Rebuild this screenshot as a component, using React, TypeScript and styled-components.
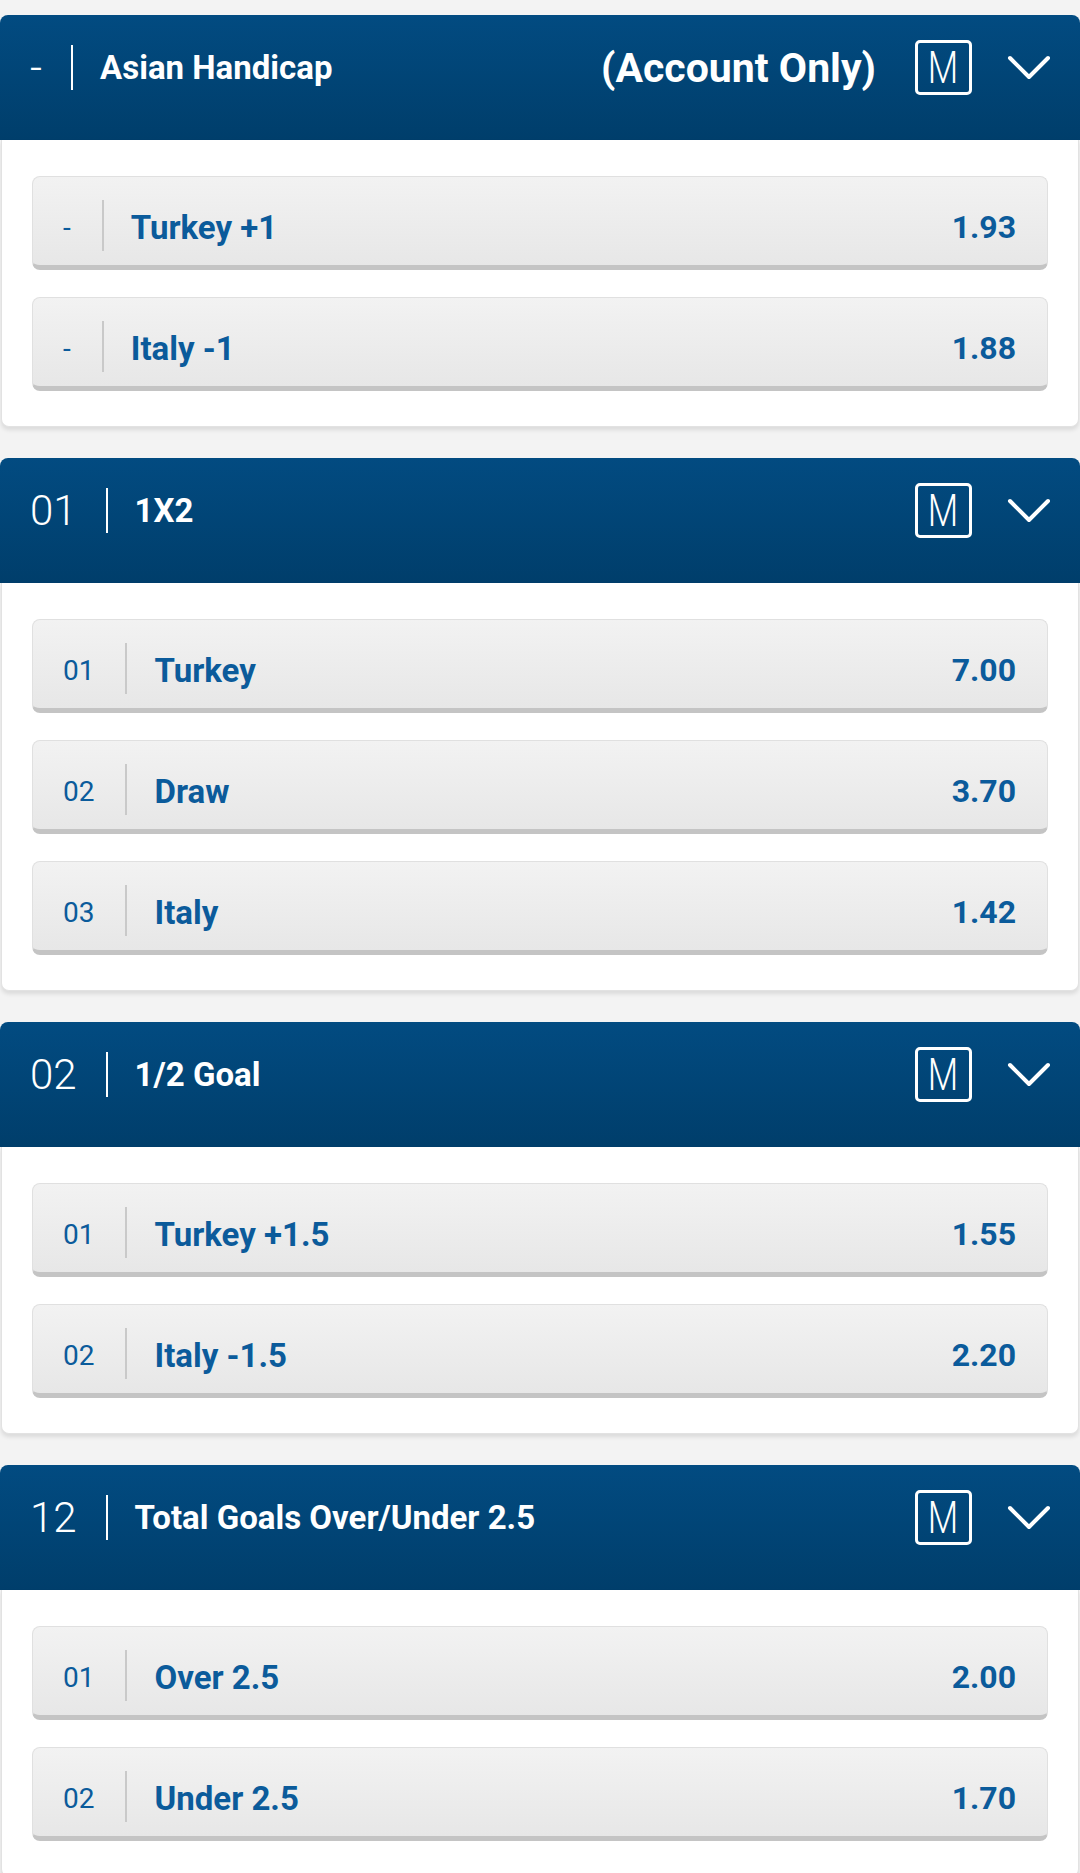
import styled, { createGlobalStyle } from "styled-components";

interface Option {
    code: string
    label: string
    odds: string
}

interface Market {
    code: string
    title: string
    note?: string
    options: Option[]
}

const markets: Market[] = [
    {
        code: "-",
        title: "Asian Handicap",
        note: "(Account Only)",
        options: [
            { code: "-", label: "Turkey +1", odds: "1.93" },
            { code: "-", label: "Italy -1", odds: "1.88" },
        ],
    },
    {
        code: "01",
        title: "1X2",
        options: [
            { code: "01", label: "Turkey", odds: "7.00" },
            { code: "02", label: "Draw", odds: "3.70" },
            { code: "03", label: "Italy", odds: "1.42" },
        ],
    },
    {
        code: "02",
        title: "1/2 Goal",
        options: [
            { code: "01", label: "Turkey +1.5", odds: "1.55" },
            { code: "02", label: "Italy -1.5", odds: "2.20" },
        ],
    },
    {
        code: "12",
        title: "Total Goals Over/Under 2.5",
        options: [
            { code: "01", label: "Over 2.5", odds: "2.00" },
            { code: "02", label: "Under 2.5", odds: "1.70" },
        ],
    },
]

const GlobalStyle = createGlobalStyle`
    * { box-sizing: border-box; }
    body {
        margin: 0;
        background: #f3f3f3;
        font-family: Roboto, "Liberation Sans", sans-serif;
    }
`

const Chevron = () => (
    <svg width="46" height="30" viewBox="0 0 46 30">
        <polyline points="4,5 23,24 42,5" fill="none" stroke="#fff" strokeWidth="4" strokeLinecap="round" strokeLinejoin="round" />
    </svg>
)

export default function App() {
    return (
        <>
            <GlobalStyle />
            <PageStyled>
                {markets.map((m) => (
                    <SectionStyled key={m.title}>
                        <HeaderStyled>
                            <HeaderCode>{m.code}</HeaderCode>
                            <HeaderDivider />
                            <HeaderTitle>{m.title}</HeaderTitle>
                            {m.note && <HeaderNote>{m.note}</HeaderNote>}
                            <MBox><span>M</span></MBox>
                            <Chevron />
                        </HeaderStyled>
                        <CardStyled>
                            {m.options.map((o) => (
                                <OptionBtn key={o.label}>
                                    <OptionCode>{o.code}</OptionCode>
                                    <OptionDivider />
                                    <OptionLabel>{o.label}</OptionLabel>
                                    <OptionOdds>{o.odds}</OptionOdds>
                                </OptionBtn>
                            ))}
                        </CardStyled>
                    </SectionStyled>
                ))}
            </PageStyled>
        </>
    )
}

const PageStyled = styled.div`
    padding-top: 15px;
    display: flex;
    flex-direction: column;
    gap: 31px;
`

const SectionStyled = styled.section`
    margin: 0 1px;
`

const HeaderStyled = styled.div`
    height: 125px;
    padding: 0 28px 20px 30px;
    display: flex;
    align-items: center;
    background: linear-gradient(#024b81, #003e6b);
    border-radius: 8px 8px 0 0;
    color: #fff;
    margin: 0 -1px;
`

const HeaderCode = styled.span`
    font-size: 42px;
    font-weight: 300;
`

const HeaderDivider = styled.div`
    width: 2px;
    height: 45px;
    background: #fff;
    margin: 0 27px 0 29px;
`

const HeaderTitle = styled.span`
    flex: 1;
    font-size: 33px;
    font-weight: 700;
`

const HeaderNote = styled.span`
    font-size: 41px;
    font-weight: 700;
    margin-right: 39px;
`

const MBox = styled.div`
    width: 57px;
    height: 55px;
    border: 3px solid #fff;
    border-radius: 5px;
    display: flex;
    align-items: center;
    justify-content: center;
    margin-right: 34px;

    span {
        font-size: 44px;
        font-weight: 300;
        transform: scaleX(0.8);
        line-height: 1;
    }
`

const CardStyled = styled.div`
    background: #fff;
    border: 1px solid #e2e2e2;
    border-top: none;
    border-radius: 0 0 8px 8px;
    box-shadow: 0 3px 4px rgba(0, 0, 0, 0.1);
    padding: 36px 30px 35px;
    display: flex;
    flex-direction: column;
    gap: 27px;
`

const OptionBtn = styled.div`
    height: 94px;
    padding: 12px 31px 0 30px;
    display: flex;
    align-items: center;
    background: linear-gradient(#f2f2f2, #e7e7e7);
    border: 1px solid #e0e0e0;
    border-bottom: 5px solid #c4c4c4;
    border-radius: 8px;
    color: #0b5b9b;
`

const OptionCode = styled.span`
    font-size: 28px;
    font-weight: 400;
`

const OptionDivider = styled.div`
    width: 2px;
    height: 51px;
    background: #c9c9c9;
    margin: -4px 27px 0 31px;
`

const OptionLabel = styled.span`
    flex: 1;
    font-size: 33px;
    font-weight: 700;
`

const OptionOdds = styled.span`
    font-size: 32px;
    font-weight: 700;
`
